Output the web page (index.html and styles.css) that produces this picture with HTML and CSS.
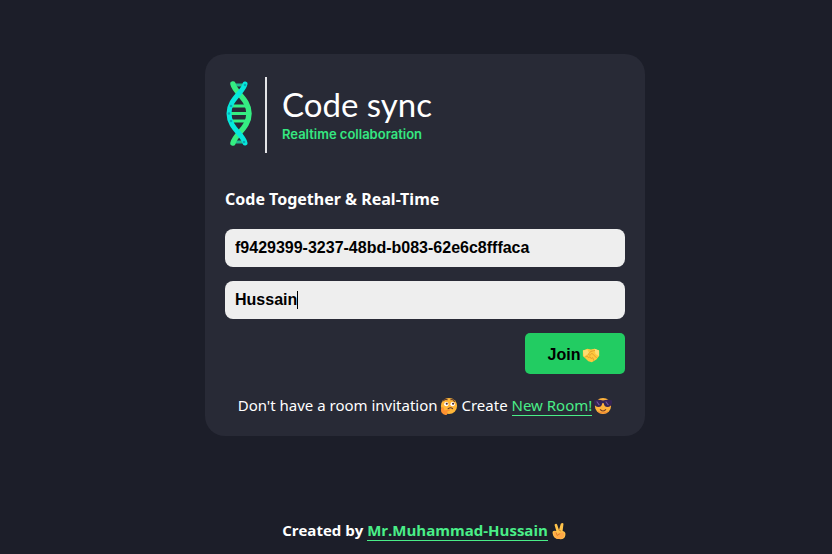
FILE: index.html
```html
<!DOCTYPE html>
<html lang="en">
<head>
<meta charset="utf-8">
<meta name="viewport" content="width=device-width, initial-scale=1">
<title>Code sync</title>
<link rel="stylesheet" href="styles.css">
</head>
<body>
<main class="home">
  <form class="card">
    <div class="brand">
      <svg class="helix" viewBox="0 0 28 68" aria-hidden="true">
        <g fill="none" stroke-linecap="round">
          <path d="M8 4H20M8 61H20" stroke="#20bd91" stroke-width="3"/>
          <path d="M6 25H23M4 32.500H24M6 40H23" stroke="#35ee82" stroke-width="3"/>
          <path d="M8 3C10 12 24 18 24 32.500S10 53 8 62" stroke="#35ee82" stroke-width="5.500"/>
          <path d="M20 3C18 12 4 18 4 32.500S18 53 20 62" stroke="#06e8dc" stroke-width="5"/>
        </g>
        <g fill="#08a9b5"><circle cx="20" cy="4" r="1.3"/><circle cx="6" cy="25" r="1.3"/><circle cx="4" cy="32.500" r="1.3"/><circle cx="6" cy="40" r="1.3"/><circle cx="19" cy="61" r="1.3"/></g>
      </svg>
      <div class="brand-text">
        <span class="brand-name">Code sync</span>
        <span class="brand-tag">Realtime collaboration</span>
      </div>
    </div>
    <h1 class="title">Code Together &amp; Real-Time</h1>
    <div class="fields">
      <input class="field" type="text" aria-label="Room ID" value="f9429399-3237-48bd-b083-62e6c8fffaca">
      <div class="field-wrap">
        <input class="field" type="text" aria-label="Username" value="Hussain">
        <span class="caret"></span>
      </div>
      <button class="join" type="button">Join<svg class="emoji" viewBox="0 0 20 20" aria-hidden="true">
        <path d="M1 5 6 3l4 1 4-1 5 2v6l-3 4-5 3-4-1-6-6z" fill="#ffc83d"/>
        <path d="M1 5 6 4 8 8l-6 4zM14 3l5 2v6l-4-2z" fill="#ffdc70"/>
        <path d="M10 6 7 9c1 2 3 1 4-1l5 5M4 12l2-1 1 2 2-1 1 2 2-1 1 3M10 6l4-1" fill="none" stroke="#df992c" stroke-width=".9" stroke-linecap="round" stroke-linejoin="round"/>
      </svg></button>
    </div>
    <p class="invite">Don't have a room invitation<svg class="emoji" viewBox="0 0 20 20" aria-hidden="true">
        <circle cx="10" cy="10" r="9" fill="#ffb638"/>
        <path d="M4 4q2-2 4-1M12 3q3-1 4 2M9 13q3-2 5 0" fill="none" stroke="#613929" stroke-width="1.2" stroke-linecap="round"/>
        <circle cx="7" cy="8" r="2.4" fill="#fff"/><circle cx="14" cy="8" r="2.4" fill="#fff"/>
        <circle cx="7.5" cy="7.5" r="1.2" fill="#4a2b38"/><circle cx="14.5" cy="7.5" r="1.2" fill="#4a2b38"/>
        <path d="M2 12q1-2 2 0l1 3 5-1q2 0 1 1l-3 1q1 4-2 4-5-1-5-6z" fill="#ff9130"/>
      </svg> Create <a class="link" href="#new">New Room!</a><svg class="emoji" viewBox="0 0 20 20" aria-hidden="true">
        <circle cx="10" cy="10" r="9" fill="#ffb33c"/>
        <path d="M3 15a9 9 0 0 0 14 0q-7 4-14 0z" fill="#f58a35"/>
        <path d="M0 4q5-2 10 0 5-2 10 0v3q-1 4-5 4-4 0-4-4H9q0 4-4 4T0 7z" fill="#352455"/>
        <path d="m3 5 3 4M13 5l3 4" stroke="#7358a0" stroke-width="1.2"/>
        <path d="M7 14q3 3 6 0" fill="none" stroke="#783f28" stroke-width="1.2" stroke-linecap="round"/>
      </svg></p>
  </form>
</main>
<footer class="credit">Created by <a class="link" href="#author">Mr.Muhammad-Hussain</a><svg class="emoji" viewBox="0 0 20 20" aria-hidden="true">
    <path d="M5 3q2-2 3 0l2 6 2-7q2-2 3 0l-1 8q4 1 3 5-1 5-7 4-6 0-7-6-1-4 4-3z" fill="#ffc34a"/>
    <path d="M4 12q2-4 3 0l1 2q1-4 3-1 3-3 5 0 0 6-6 6-5 0-6-7z" fill="#ffa947"/>
    <path d="m7 12 1 3 3-2M10 9l2 1" fill="none" stroke="#d87b28" stroke-linecap="round"/>
  </svg></footer>
</body>
</html>
```
FILE: styles.css
```css
* {
  box-sizing: border-box;
}

body {
  margin: 0;
  min-height: 100vh;
  display: flex;
  flex-direction: column;
  padding-left: 18px;
  background: #1c1e29;
  color: #fff;
  font: 15px/24px "Open Sans", sans-serif;
}

.home {
  flex: 1;
  display: flex;
  align-items: center;
  justify-content: center;
  padding-bottom: 29px;
}

.card {
  width: 440px;
  max-width: 90%;
  padding: 20px;
  border-radius: 20px;
  background: #282a36;
}

.brand {
  display: flex;
  align-items: center;
  gap: 12px;
  height: 82px;
}

.helix {
  width: 28px;
  height: 68px;
  overflow: visible;
}

.brand-text {
  display: flex;
  flex-direction: column;
  justify-content: center;
  height: 76px;
  padding: 2px 0 0 15px;
  border-left: 2px solid #e4e4e7;
}

.brand-name {
  font: 33px/36px Lato, sans-serif;
}

.brand-tag {
  color: #35e781;
  font: 600 13px/24px Inter, sans-serif;
}

.title {
  margin: 31px 0 18px;
  font: 700 16px/24px "Noto Sans", sans-serif;
}

.fields {
  display: flex;
  flex-direction: column;
  gap: 14px;
}

.field-wrap {
  position: relative;
}

.field {
  display: block;
  width: 100%;
  height: 38px;
  padding: 0 10px;
  border: 0;
  border-radius: 8px;
  outline: none;
  background: #eee;
  color: #000;
  font: 700 16px "Liberation Sans", sans-serif;
}

.caret {
  position: absolute;
  top: 10px;
  left: 72px;
  width: 1px;
  height: 18px;
  background: #000;
}

.join {
  align-self: flex-end;
  width: 100px;
  height: 41px;
  padding: 3px 2px 0 0;
  border: 0;
  border-radius: 5px;
  background: #22cc62;
  color: #000;
  font: 700 16px "Liberation Sans", sans-serif;
}

.emoji {
  width: 18px;
  height: 18px;
  margin-left: 2px;
  vertical-align: -4px;
}

.invite {
  margin: 20px 0 0;
  font: 15px/22px "Noto Sans", sans-serif;
  text-align: center;
}

.link {
  color: #4aee88;
  text-decoration: none;
  border-bottom: 1px solid #4aee88;
}

.credit {
  padding-bottom: 12px;
  font-weight: 700;
  text-align: center;
}
```
